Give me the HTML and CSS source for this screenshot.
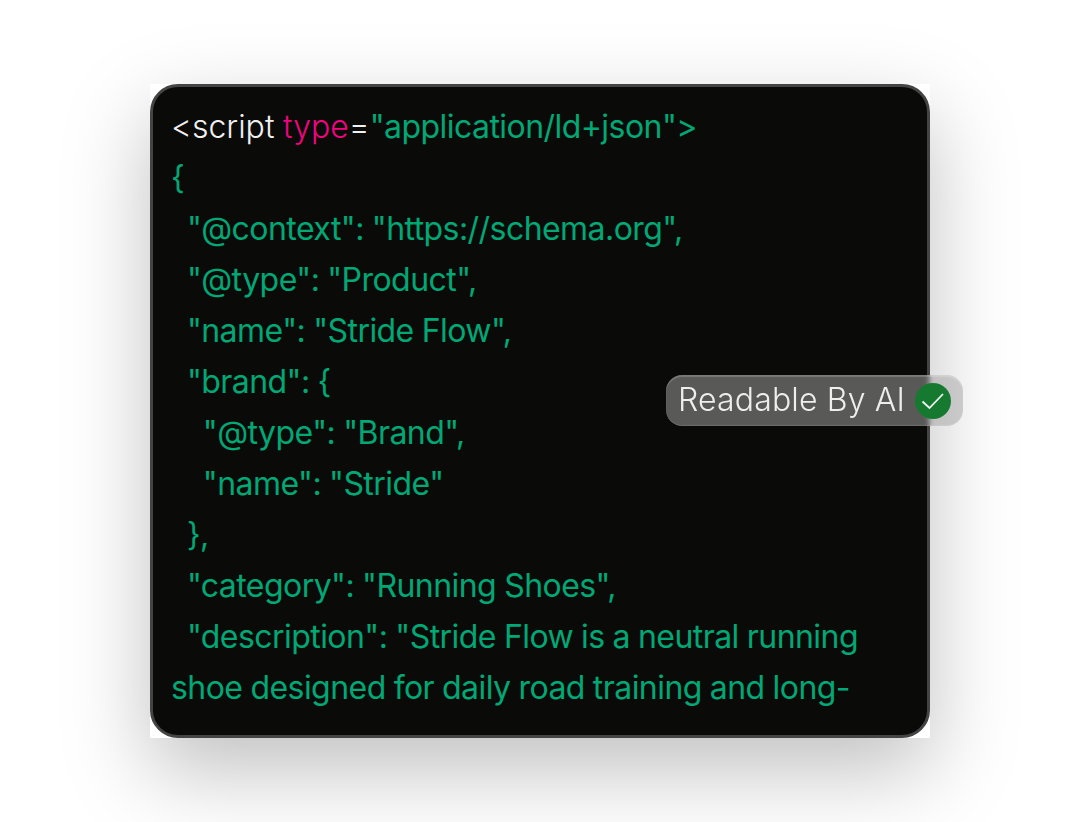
FILE: index.html
```html
<!DOCTYPE html>
<html lang="en">
<head>
<meta charset="utf-8">
<title>Readable By AI</title>
<link rel="stylesheet" href="styles.css">
</head>
<body>
<main class="stage">
  <div class="frame">
    <div class="card">
<pre class="code"><span class="tag">&lt;script </span><span class="attr">type</span><span class="tag">=</span>"application/ld+json"&gt;
{
  "@context": "https://schema.org",
  "@type": "Product",
  "name": "Stride Flow",
  "brand": {
    "@type": "Brand",
    "name": "Stride"
  },
  "category": "Running Shoes",
  "description": "Stride Flow is a neutral running
shoe designed for daily road training and long-</pre>
    </div>
    <div class="pill">
      <span class="pill-text">Readable By AI</span>
      <svg class="pill-icon" viewBox="0 0 36 36" aria-hidden="true">
        <circle cx="18" cy="18" r="18" fill="#157a30"/>
        <path d="M7.5 18.5l7 6.5L28 11" fill="none" stroke="#f2f2f2" stroke-width="1.8"/>
      </svg>
    </div>
  </div>
</main>
</body>
</html>
```
FILE: styles.css
```css
html, body {
  margin: 0;
  padding: 0;
  background: #fff;
}
.stage {
  height: 822px;
  overflow: hidden;
  display: flex;
  align-items: flex-start;
  justify-content: center;
  padding-top: 84px;
  box-sizing: border-box;
}
.frame {
  position: relative;
  width: 780px;
  height: 654px;
  background: #fff;
  box-shadow: 0 32px 80px rgba(0, 0, 0, 0.25);
}
.card {
  box-sizing: border-box;
  height: 100%;
  background: #0a0a08;
  border: 3px solid #444;
  border-radius: 28px;
  padding: 14px 18px;
  overflow: hidden;
}
.code {
  margin: 0;
  font-family: Inter, sans-serif;
  font-size: 32px;
  font-weight: 400;
  line-height: 51px;
  letter-spacing: -0.55px;
  word-spacing: -0.5px;
  color: #00a876;
  white-space: pre;
}
.tag { color: #f0f0f0; font-weight: 300; letter-spacing: 0; }
.attr { color: #f0047f; font-weight: 300; letter-spacing: 0; }
.pill {
  position: absolute;
  left: 516px;
  top: 291px;
  width: 297px;
  height: 51px;
  box-sizing: border-box;
  display: flex;
  align-items: center;
  justify-content: space-between;
  padding: 0 12px 2px 12px;
  border-radius: 16px;
  background: rgba(165, 165, 165, 0.516);
  backdrop-filter: blur(2px);
  box-shadow: inset 0 2px 1px rgba(255, 255, 255, 0.2), inset 0 -1px 1px rgba(255, 255, 255, 0.12);
}
.pill-text {
  font-family: Inter, sans-serif;
  font-size: 32px;
  font-weight: 300;
  letter-spacing: 0.15px;
  color: #eee;
  white-space: nowrap;
}
.pill-icon {
  width: 36px;
  height: 36px;
  flex: none;
  margin-top: 2px;
}
```
